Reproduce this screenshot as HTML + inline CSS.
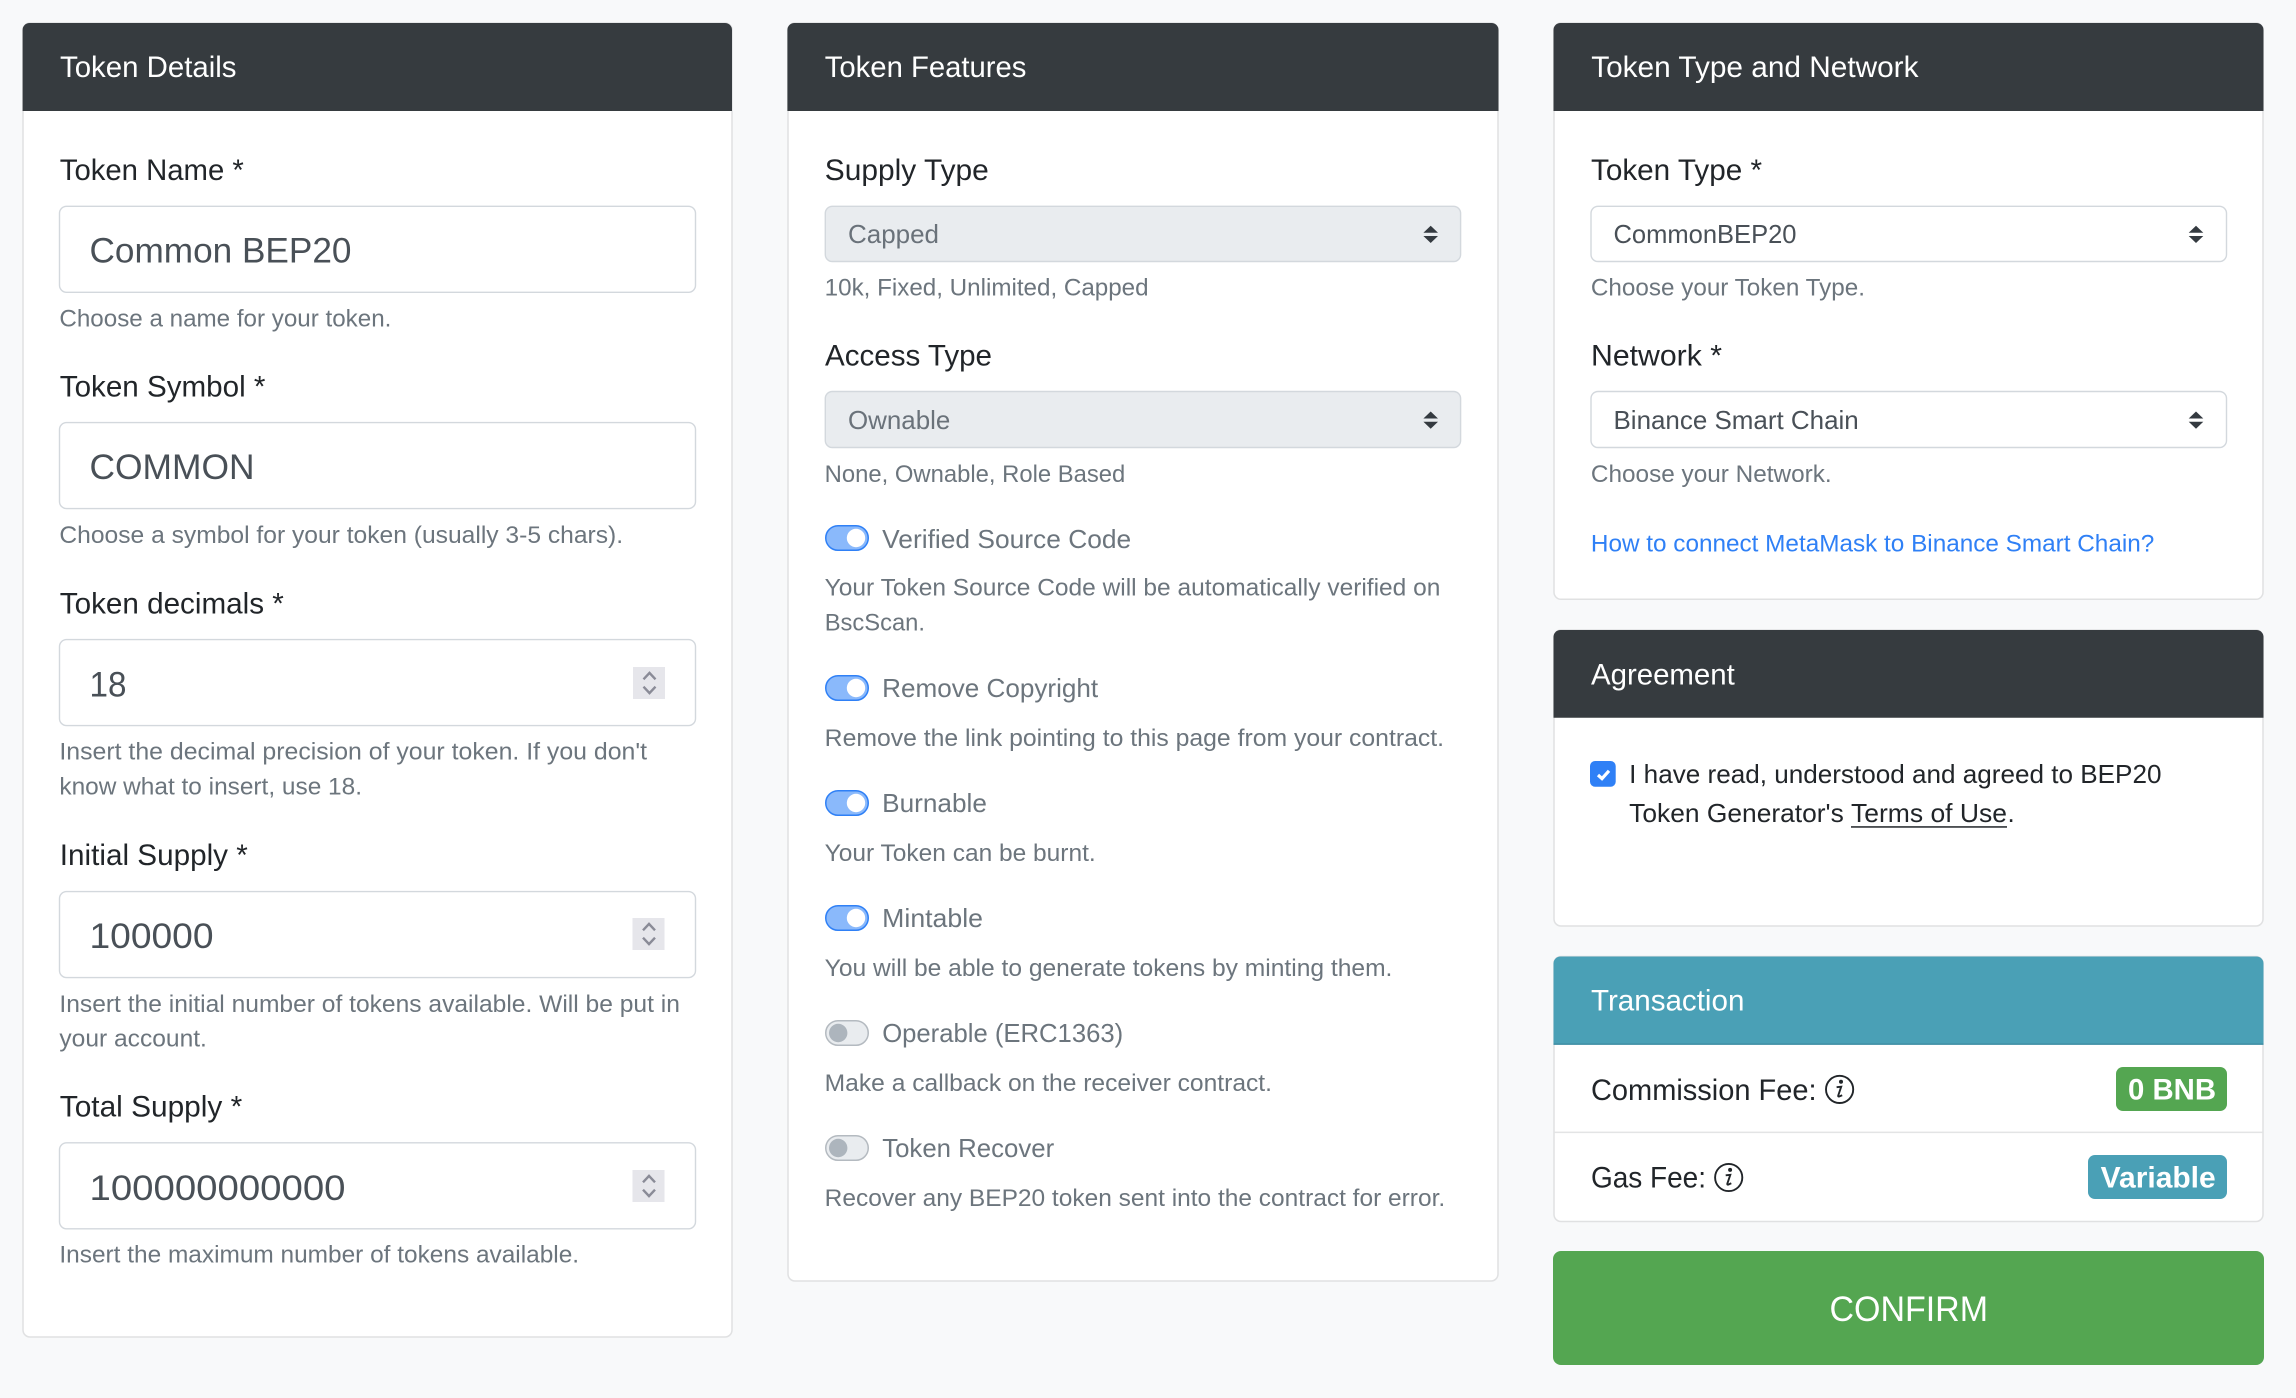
<!DOCTYPE html>
<html lang="en">
<head>
<meta charset="utf-8">
<title>Token Generator</title>
<style>
html,body{margin:0;padding:0;background:#f8f9fa;width:2296px;height:1398px;overflow:hidden}
svg{display:block}
text{font-family:"Liberation Sans",Arial,sans-serif;white-space:pre}
.t{font-size:29.7px;fill:#fff}
.l{font-size:29.7px;fill:#212529}
.v{font-size:35.5px;fill:#495057}
.h{font-size:23.7px;fill:#6c757d}
.s{font-size:25.9px;fill:#495057}
.g{font-size:25.9px;fill:#6a727a}
.sw{font-size:25.9px;fill:#6c757d}
.a{font-size:25.9px;fill:#212529}
.b{font-size:29.7px;font-weight:700;fill:#fff}
.card{fill:#fff;stroke:#e0e1e2;stroke-width:1.5}
.inp{fill:#fff;stroke:#d3d8dd;stroke-width:1.4}
.dis{fill:#e9ecef;stroke:#d3d8dd;stroke-width:1.4}
.chev{fill:none;stroke:#8a8b97;stroke-width:2.4}
.on{fill:#8ab9fb;stroke:#2f80f6;stroke-width:1.5}
.off{fill:#e9ecef;stroke:#b4bac0;stroke-width:1.5}
.arr{fill:#343a40}
.ic{fill:none;stroke:#212529;stroke-width:1.9}
</style>
</head>
<body>
<svg xmlns="http://www.w3.org/2000/svg" width="2296" height="1398" viewBox="0 0 2296 1398">
<defs>
<g id="spin"><rect x="0" y="0" width="32" height="32" fill="#e6e6eb"/><path class="chev" d="M10.5 12.3L16.5 5.9L22.5 12.3M10.5 19.7L16.5 26.1L22.5 19.7"/></g>
<g id="arrows"><path class="arr" d="M0 0L7.3 7H-7.3ZM-7.3 10.3H7.3L0 17.3Z"/></g>
<g id="swon"><rect class="on" x=".75" y=".75" width="42.5" height="24.5" rx="12.25"/><circle cx="31" cy="13" r="9.2" fill="#fff"/></g>
<g id="swoff"><rect class="off" x=".75" y=".75" width="42.5" height="24.5" rx="12.25"/><circle cx="13.2" cy="13" r="9.2" fill="#adb5bd"/></g>
<g id="info"><circle class="ic" cx="0" cy="0" r="13.6"/><circle cx="1.4" cy="-7.6" r="2" fill="#212529"/><path fill="none" stroke="#212529" stroke-width="1.9" d="M-3 -2.2L1.6 -2.7L-1.4 6.2Q-1.6 7.4 -.4 7.1L2.6 5.8"/></g>
</defs>

<rect width="2296" height="1398" fill="#f8f9fa"/>

<!-- Token Details -->
<rect class="card" x="23" y="23" width="709" height="1314" rx="7"/>
<path d="M22.6 30a7 7 0 0 1 7-7H725a7 7 0 0 1 7 7V111H22.6Z" fill="#363b3f"/>
<text class="t" x="60" y="77" textLength="176.5" lengthAdjust="spacingAndGlyphs">Token Details</text>

<text class="l" x="59.8" y="180" textLength="184" lengthAdjust="spacingAndGlyphs">Token Name *</text>
<rect class="inp" x="59.5" y="206.3" width="636" height="86" rx="7"/>
<text class="v" x="89.5" y="262.7" textLength="262" lengthAdjust="spacingAndGlyphs">Common BEP20</text>
<text class="h" x="59.4" y="326.7" textLength="332" lengthAdjust="spacingAndGlyphs">Choose a name for your token.</text>

<text class="l" x="59.8" y="396.7" textLength="205.6" lengthAdjust="spacingAndGlyphs">Token Symbol *</text>
<rect class="inp" x="59.5" y="422.6" width="636" height="86" rx="7"/>
<text class="v" x="89.5" y="479" textLength="165" lengthAdjust="spacingAndGlyphs">COMMON</text>
<text class="h" x="59.4" y="543" textLength="563.7" lengthAdjust="spacingAndGlyphs">Choose a symbol for your token (usually 3-5 chars).</text>

<text class="l" x="59.8" y="613.5" textLength="224" lengthAdjust="spacingAndGlyphs">Token decimals *</text>
<rect class="inp" x="59.5" y="639.6" width="636" height="86" rx="7"/>
<text class="v" x="89.5" y="696.7" textLength="37" lengthAdjust="spacingAndGlyphs">18</text>
<use href="#spin" x="633" y="667"/>
<text class="h" x="59.4" y="759.3" textLength="587.6" lengthAdjust="spacingAndGlyphs">Insert the decimal precision of your token. If you don't</text>
<text class="h" x="59.4" y="794.3" textLength="302.6" lengthAdjust="spacingAndGlyphs">know what to insert, use 18.</text>

<text class="l" x="59.8" y="865" textLength="188" lengthAdjust="spacingAndGlyphs">Initial Supply *</text>
<rect class="inp" x="59.5" y="891.6" width="636" height="86" rx="7"/>
<text class="v" x="89.5" y="948" textLength="124" lengthAdjust="spacingAndGlyphs">100000</text>
<use href="#spin" x="632.5" y="918"/>
<text class="h" x="59.4" y="1011.8" textLength="620.5" lengthAdjust="spacingAndGlyphs">Insert the initial number of tokens available. Will be put in</text>
<text class="h" x="59.4" y="1046.7" textLength="147.5" lengthAdjust="spacingAndGlyphs">your account.</text>

<text class="l" x="59.8" y="1116.7" textLength="182.4" lengthAdjust="spacingAndGlyphs">Total Supply *</text>
<rect class="inp" x="59.5" y="1142.8" width="636" height="86" rx="7"/>
<text class="v" x="89.5" y="1200" textLength="256" lengthAdjust="spacingAndGlyphs">100000000000</text>
<use href="#spin" x="632.5" y="1170"/>
<text class="h" x="59.4" y="1262.7" textLength="519.7" lengthAdjust="spacingAndGlyphs">Insert the maximum number of tokens available.</text>

<!-- Token Features -->
<rect class="card" x="788" y="23" width="710" height="1258" rx="7"/>
<path d="M787.4 30a7 7 0 0 1 7-7H1491.5a7 7 0 0 1 7 7V111H787.4Z" fill="#363b3f"/>
<text class="t" x="824.8" y="77" textLength="201.6" lengthAdjust="spacingAndGlyphs">Token Features</text>

<text class="l" x="824.8" y="180" textLength="164" lengthAdjust="spacingAndGlyphs">Supply Type</text>
<rect class="dis" x="825.3" y="206.3" width="635.3" height="55.2" rx="7"/>
<text class="g" x="848" y="242.9" textLength="91" lengthAdjust="spacingAndGlyphs">Capped</text>
<use href="#arrows" x="1430.7" y="225.7"/>
<text class="h" x="824.7" y="295.7" textLength="323.9" lengthAdjust="spacingAndGlyphs">10k, Fixed, Unlimited, Capped</text>

<text class="l" x="825" y="365.3" textLength="167" lengthAdjust="spacingAndGlyphs">Access Type</text>
<rect class="dis" x="825.3" y="391.5" width="635.3" height="56" rx="7"/>
<text class="g" x="848" y="428.9" textLength="102.3" lengthAdjust="spacingAndGlyphs">Ownable</text>
<use href="#arrows" x="1430.7" y="411.5"/>
<text class="h" x="824.7" y="482" textLength="300.6" lengthAdjust="spacingAndGlyphs">None, Ownable, Role Based</text>

<use href="#swon" x="825" y="525"/>
<text class="sw" x="882.2" y="547.9" textLength="249" lengthAdjust="spacingAndGlyphs">Verified Source Code</text>
<text class="h" x="824.7" y="595.7" textLength="615.7" lengthAdjust="spacingAndGlyphs">Your Token Source Code will be automatically verified on</text>
<text class="h" x="824.7" y="630.7" textLength="100.3" lengthAdjust="spacingAndGlyphs">BscScan.</text>

<use href="#swon" x="825" y="675"/>
<text class="sw" x="882.2" y="697" textLength="216" lengthAdjust="spacingAndGlyphs">Remove Copyright</text>
<text class="h" x="824.7" y="745.9" textLength="619.3" lengthAdjust="spacingAndGlyphs">Remove the link pointing to this page from your contract.</text>

<use href="#swon" x="825" y="790"/>
<text class="sw" x="882.2" y="812.2" textLength="104.7" lengthAdjust="spacingAndGlyphs">Burnable</text>
<text class="h" x="824.7" y="860.9" textLength="271" lengthAdjust="spacingAndGlyphs">Your Token can be burnt.</text>

<use href="#swon" x="825" y="905"/>
<text class="sw" x="882.2" y="927" textLength="100.8" lengthAdjust="spacingAndGlyphs">Mintable</text>
<text class="h" x="824.7" y="975.9" textLength="567.7" lengthAdjust="spacingAndGlyphs">You will be able to generate tokens by minting them.</text>

<use href="#swoff" x="825" y="1020"/>
<text class="sw" x="882.2" y="1042" textLength="241" lengthAdjust="spacingAndGlyphs">Operable (ERC1363)</text>
<text class="h" x="824.7" y="1090.9" textLength="447.3" lengthAdjust="spacingAndGlyphs">Make a callback on the receiver contract.</text>

<use href="#swoff" x="825" y="1135"/>
<text class="sw" x="882.2" y="1157" textLength="172" lengthAdjust="spacingAndGlyphs">Token Recover</text>
<text class="h" x="824.7" y="1205.9" textLength="620.5" lengthAdjust="spacingAndGlyphs">Recover any BEP20 token sent into the contract for error.</text>

<!-- Token Type and Network -->
<rect class="card" x="1554" y="23" width="709" height="576.3" rx="7"/>
<path d="M1553.5 30a7 7 0 0 1 7-7H2256.5a7 7 0 0 1 7 7V111H1553.5Z" fill="#363b3f"/>
<text class="t" x="1591.2" y="77" textLength="327.3" lengthAdjust="spacingAndGlyphs">Token Type and Network</text>

<text class="l" x="1591" y="180" textLength="171" lengthAdjust="spacingAndGlyphs">Token Type *</text>
<rect class="inp" x="1591" y="206.3" width="635.5" height="55.2" rx="7"/>
<text class="s" x="1613.5" y="242.9" textLength="183" lengthAdjust="spacingAndGlyphs">CommonBEP20</text>
<use href="#arrows" x="2196" y="225.7"/>
<text class="h" x="1590.9" y="295.7" textLength="274.1" lengthAdjust="spacingAndGlyphs">Choose your Token Type.</text>

<text class="l" x="1591" y="365.3" textLength="131" lengthAdjust="spacingAndGlyphs">Network *</text>
<rect class="inp" x="1591" y="391.5" width="635.5" height="56" rx="7"/>
<text class="s" x="1613.5" y="428.9" textLength="245.2" lengthAdjust="spacingAndGlyphs">Binance Smart Chain</text>
<use href="#arrows" x="2196" y="411.5"/>
<text class="h" x="1590.9" y="482" textLength="240.8" lengthAdjust="spacingAndGlyphs">Choose your Network.</text>

<text class="h" style="fill:#2f80f6" x="1590.9" y="551.7" textLength="563.4" lengthAdjust="spacingAndGlyphs">How to connect MetaMask to Binance Smart Chain?</text>

<!-- Agreement -->
<rect class="card" x="1554" y="630" width="709" height="296" rx="7"/>
<path d="M1553.5 637a7 7 0 0 1 7-7H2256.5a7 7 0 0 1 7 7V717.7H1553.5Z" fill="#363b3f"/>
<text class="t" x="1591" y="684.3" textLength="143.8" lengthAdjust="spacingAndGlyphs">Agreement</text>

<rect x="1590" y="761" width="25.7" height="25.7" rx="5" fill="#2f80f6"/>
<path d="M1598 775L1602 778.6L1609 770.8" fill="none" stroke="#fff" stroke-width="3.2"/>
<text class="a" x="1629.2" y="783.2" textLength="532.3" lengthAdjust="spacingAndGlyphs">I have read, understood and agreed to BEP20</text>
<text class="a" x="1629.2" y="822" textLength="214.6" lengthAdjust="spacingAndGlyphs">Token Generator's</text>
<text class="a" x="1851" y="822" textLength="156" lengthAdjust="spacingAndGlyphs">Terms of Use</text>
<rect x="1851" y="826.2" width="156" height="1.5" fill="#212529"/>
<text class="a" x="2007.5" y="822">.</text>

<!-- Transaction -->
<rect class="card" x="1554" y="956.5" width="709" height="265" rx="7"/>
<path d="M1553.5 963.5a7 7 0 0 1 7-7H2256.5a7 7 0 0 1 7 7V1044.7H1553.5Z" fill="#4aa0b6"/>
<rect x="1553.5" y="1043.4" width="710" height="1.4" fill="#3f8ea4"/>
<text class="t" x="1591" y="1010.7" textLength="153.4" lengthAdjust="spacingAndGlyphs">Transaction</text>

<text class="l" x="1591" y="1100" textLength="225.5" lengthAdjust="spacingAndGlyphs">Commission Fee:</text>
<use href="#info" x="1839.6" y="1089.4"/>
<rect x="2116" y="1067" width="111" height="44" rx="7" fill="#54a651"/>
<text class="b" x="2128" y="1099.3" textLength="88" lengthAdjust="spacingAndGlyphs">0 BNB</text>
<rect x="1554.3" y="1131.6" width="708.5" height="1.5" fill="#e3e4e5"/>

<text class="l" x="1591" y="1187.7" textLength="115" lengthAdjust="spacingAndGlyphs">Gas Fee:</text>
<use href="#info" x="1728.7" y="1177.5"/>
<rect x="2088" y="1155" width="139" height="44" rx="7" fill="#4aa0b6"/>
<text class="b" x="2100.7" y="1187.3" textLength="115" lengthAdjust="spacingAndGlyphs">Variable</text>

<!-- Confirm -->
<rect x="1553" y="1251" width="711" height="114" rx="8" fill="#54a651"/>
<text class="v" style="fill:#fff" x="1829.5" y="1321" textLength="158.5" lengthAdjust="spacingAndGlyphs">CONFIRM</text>
</svg>
</body>
</html>
